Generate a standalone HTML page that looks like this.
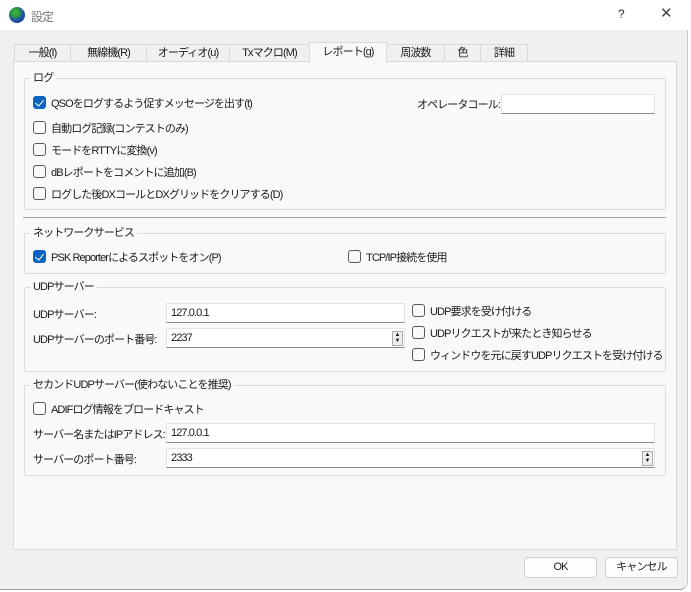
<!DOCTYPE html>
<html><head><meta charset="utf-8"><style>
*{box-sizing:border-box;margin:0;padding:0}
body{width:691px;height:592px;background:#fff;font-family:"Liberation Sans","Noto Sans CJK JP",sans-serif;font-size:11px;letter-spacing:-0.9px;color:#1a1a1a;position:relative;overflow:hidden;white-space:nowrap}
.a{position:absolute}
.win{position:absolute;left:0;top:30px;width:688px;height:560px;background:#f0f0f0;border-right:1px solid #c8c8c8;border-bottom:1px solid #a0a0a0;border-bottom-right-radius:8px}
.tab{position:absolute;top:44px;height:18px;border:1px solid #dadada;border-bottom:none;background:#f0f0f0;text-align:center;line-height:16px}
.page{position:absolute;left:13px;top:61px;width:664px;height:489px;background:#f9f9f9;border:1px solid #dadada}
.grp{position:absolute;border:1px solid #dcdcdc;border-radius:2px}
.gt{position:absolute;background:#f9f9f9;padding:0 3px;line-height:14px;top:-8px;left:5px}
.cb{position:absolute;width:13px;height:13px;border:1px solid #5a5a5a;border-radius:3px;background:#fafafa}
.cb.on{background:#0a64c0;border-color:#0a64c0}
.cb.on::after{content:"";position:absolute;left:3px;top:1px;width:4px;height:7px;border:solid #fff;border-width:0 1.3px 1.3px 0;transform:rotate(40deg)}
.inp{position:absolute;height:20px;background:#fff;border:1px solid #e3e3e3;border-bottom:1px solid #8a8a8a;padding-left:4px;line-height:18px}
.spin{position:absolute;right:1px;top:2px;width:11px;height:15px;border:1px solid #aaa;background:#eee;font-size:6px;line-height:6px;text-align:center;letter-spacing:0}
.btn{position:absolute;top:557px;height:21px;width:73px;border:1px solid #cfcfcf;border-radius:4px;background:#fdfdfd;text-align:center;line-height:19px}
</style></head><body>
<div class="a" style="left:9px;top:7px;width:16px;height:16px;border-radius:50%;background:radial-gradient(circle at 40% 35%,#3db94a 0,#2a9a3a 30%,#1f4fb5 55%,#14337f 100%)"></div>
<div class="a" style="left:31px;top:8px;color:#777;font-size:12px">設定</div>
<div class="a" style="left:618px;top:7px;color:#333;font-size:12px">?</div>
<div class="a" style="left:660px;top:4px;color:#444;font-size:15px">✕</div>
<div class="win"></div>
<div class="tab" style="left:14px;width:57px">一般(I)</div>
<div class="tab" style="left:70px;width:77px">無線機(R)</div>
<div class="tab" style="left:146px;width:84px">オーディオ(u)</div>
<div class="tab" style="left:229px;width:81px">Txマクロ(M)</div>
<div class="tab" style="left:386px;width:59px">周波数</div>
<div class="tab" style="left:444px;width:37px">色</div>
<div class="tab" style="left:480px;width:48px">詳細</div>
<div class="page"></div>
<div class="tab" style="left:309px;top:42px;height:21px;width:78px;background:#f9f9f9;z-index:2;line-height:18px">レポート(g)</div>

<div class="grp" style="left:24px;top:78px;width:642px;height:132px"><span class="gt">ログ</span></div>
<div class="cb on" style="left:33px;top:96px"></div><div class="a" style="left:51px;top:95px">QSOをログするよう促すメッセージを出す(t)</div>
<div class="a" style="left:417px;top:96px">オペレータコール:</div>
<div class="inp" style="left:501px;top:94px;width:154px"></div>
<div class="cb" style="left:33px;top:121px"></div><div class="a" style="left:51px;top:120px">自動ログ記録(コンテストのみ)</div>
<div class="cb" style="left:33px;top:143px"></div><div class="a" style="left:51px;top:142px">モードをRTTYに変換(v)</div>
<div class="cb" style="left:33px;top:165px"></div><div class="a" style="left:51px;top:164px">dBレポートをコメントに追加(B)</div>
<div class="cb" style="left:33px;top:187px"></div><div class="a" style="left:51px;top:186px">ログした後DXコールとDXグリッドをクリアする(D)</div>
<div class="a" style="left:23px;top:217px;width:643px;height:1px;background:#a0a0a0"></div>

<div class="grp" style="left:24px;top:233px;width:642px;height:41px"><span class="gt">ネットワークサービス</span></div>
<div class="cb on" style="left:33px;top:250px"></div><div class="a" style="left:51px;top:249px">PSK Reporterによるスポットをオン(P)</div>
<div class="cb" style="left:348px;top:250px"></div><div class="a" style="left:366px;top:249px">TCP/IP接続を使用</div>

<div class="grp" style="left:24px;top:287px;width:642px;height:85px"><span class="gt">UDPサーバー</span></div>
<div class="a" style="left:33px;top:306px">UDPサーバー:</div>
<div class="inp" style="left:166px;top:303px;width:239px">127.0.0.1</div>
<div class="a" style="left:33px;top:331px">UDPサーバーのポート番号:</div>
<div class="inp" style="left:166px;top:328px;width:239px">2237<div class="spin">▲<br>▼</div></div>
<div class="cb" style="left:412px;top:304px"></div><div class="a" style="left:430px;top:303px">UDP要求を受け付ける</div>
<div class="cb" style="left:412px;top:326px"></div><div class="a" style="left:430px;top:325px">UDPリクエストが来たとき知らせる</div>
<div class="cb" style="left:412px;top:348px"></div><div class="a" style="left:430px;top:347px">ウィンドウを元に戻すUDPリクエストを受け付ける</div>

<div class="grp" style="left:24px;top:385px;width:642px;height:91px"><span class="gt">セカンドUDPサーバー(使わないことを推奨)</span></div>
<div class="cb" style="left:33px;top:402px"></div><div class="a" style="left:51px;top:401px">ADIFログ情報をブロードキャスト</div>
<div class="a" style="left:33px;top:426px">サーバー名またはIPアドレス:</div>
<div class="inp" style="left:166px;top:423px;width:489px">127.0.0.1</div>
<div class="a" style="left:33px;top:451px">サーバーのポート番号:</div>
<div class="inp" style="left:166px;top:448px;width:489px">2333<div class="spin">▲<br>▼</div></div>

<div class="btn" style="left:524px">OK</div>
<div class="btn" style="left:605px">キャンセル</div>
</body></html>
